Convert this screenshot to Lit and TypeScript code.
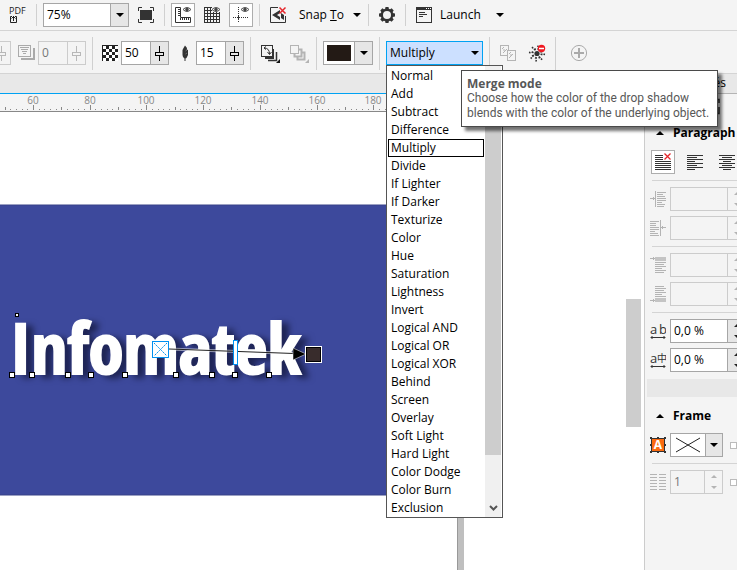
import { LitElement, html, svg, css } from "lit";
import { customElement, state } from "lit/decorators.js";
import { classMap } from "lit/directives/class-map.js";

const MODES = [
  "Normal", "Add", "Subtract", "Difference", "Multiply", "Divide", "If Lighter", "If Darker",
  "Texturize", "Color", "Hue", "Saturation", "Lightness", "Invert", "Logical AND", "Logical OR",
  "Logical XOR", "Behind", "Screen", "Overlay", "Soft Light", "Hard Light", "Color Dodge",
  "Color Burn", "Exclusion",
];

const icon = (body: unknown, w = 24, h = 24) =>
  html`<svg class="icon" width=${w} height=${h} viewBox="0 0 ${w} ${h}" aria-hidden="true">${body}</svg>`;

const eye = svg`<path d="M12 6.5Q16 2.5 20 6.5Q16 10.500 12 6.500Z" fill="#f4f4f4" stroke="#555"/><circle cx="16" cy="6.500" r="1.700" fill="#444"/>`;

/* Horizontal bars given as [x, y, width] */
const bars = (rows: number[][], color: string, thick = 1) =>
  rows.map(([x, y, w]) => svg`<rect x=${x} y=${y} width=${w} height=${thick} fill=${color}/>`);

const checker = () => {
  const cells = [];
  for (let r = 0; r < 5; r++)
    for (let c = 0; c < 5; c++)
      if ((r + c) % 2 === 0) cells.push(svg`<rect x=${1 + c * 3} y=${1 + r * 3} width="3" height="3" fill="#fff"/>`);
  return cells;
};

const icons = {
  pdf: icon(svg`<text x="3" y="11" font-size="9" fill="#222">PDF</text>
    <path d="M6 13.500H4.500V19.500H10.500V13.500H9M7.500 18V13M5.500 15.500L7.500 13.500L9.500 15.500" fill="none" stroke="#222"/>`),
  full: icon(svg`<rect x="6" y="7" width="12" height="10" fill="#333"/>
    <path d="M8 4.500H4.500V8M16 4.500H19.500V8M4.500 16V19.500H8M19.500 16V19.500H16" fill="none" stroke="#333"/>`),
  rulers: icon(svg`<path d="M4.500 4.500H9.500V14.500H19.500V19.500H4.500Z" fill="#fff" stroke="#333"/>
    <path d="M7 6.500H9M7 8.500H9M7 10.500H9M7 12.500H9M9.500 15V17M11.500 15V17M13.500 15V17M15.500 15V17M17.500 15V17" stroke="#333"/>${eye}`),
  grid: icon(svg`<path d="M4.500 4V20M7.500 4V20M10.500 4V20M13.500 9V20M16.500 9V20M19.500 9V20M4 4.500H12M4 7.500H12M4 10.500H20M4 13.500H20M4 16.500H20M4 19.500H20" stroke="#333" fill="none"/>${eye}`),
  guides: icon(svg`<path d="M4 14.500H20" stroke="#333" stroke-dasharray="1 1"/><path d="M9.500 4V20" stroke="#333" stroke-dasharray="1 1"/><path d="M8 14.500H11M9.500 13V16" stroke="#333"/>${eye}`),
  snap: icon(svg`<path d="M12 4.500H4.500V19.500H19.500V13" fill="none" stroke="#333"/>
    <path d="M14 7L6 12L14 17V14L11 12L14 10Z" fill="#333"/><path d="M15 10L18 12V17L15 15Z" fill="#333"/>
    <path d="M13.500 4.500L19.500 10.500M19.500 4.500L13.500 10.500" stroke="#e5262b" stroke-width="1.500"/>`),
  gear: icon(svg`<circle cx="12" cy="12" r="5.200" fill="none" stroke="#333" stroke-width="2.400"/>
    ${[0, 45, 90, 135, 180, 225, 270, 315].map((a) => svg`<path d="M10 6.500L10.500 4H13.500L14 6.500Z" fill="#333" transform="rotate(${a} 12 12)"/>`)}`),
  launch: icon(svg`<rect x="4.500" y="4.500" width="15" height="15" fill="none" stroke="#333"/><rect x="4" y="4" width="16" height="3" fill="#333"/>
    <path d="M14 5.500H15M16 5.500H17M18 5.500H19" stroke="#fff"/>${bars([[7, 9, 6], [7, 11, 8], [7, 13, 4]], "#333")}`),
  fade: icon(svg`<path d="M5 18H18V7" fill="none" stroke="#aaa" stroke-width="2"/><rect x="2.500" y="4.500" width="12" height="11" fill="#f4f4f4" stroke="#aaa"/>
    <path d="M4 6.500H13M5 8.500H12M6 10.500H11M7 12.500H10" stroke="#aaa"/>`, 22, 24),
  opacity: icon(svg`<g transform="translate(3 4)"><rect width="16" height="16" fill="#222"/>${checker()}</g>`, 22, 24),
  feather: icon(svg`<path d="M11 4.500L13 7L12.800 8.500L14 9V14L12.500 17L11.500 17.500V20H10.500V17.500L9 16L8.500 14V9L9.500 7Z" fill="#333"/><path d="M11.500 10L13 9M11.500 13L13 12" stroke="#999" stroke-width="0.600"/>`, 22, 24),
  direction: icon(svg`<path d="M8 17H16V8" fill="none" stroke="#333" stroke-width="2"/><path d="M11 19.500H19.500V11" fill="none" stroke="#333" stroke-width="1.500"/>
    <rect x="4.500" y="4.500" width="11" height="11" fill="#f4f4f4" stroke="#333"/><path d="M7 7Q12.500 7 12.500 13M10.500 11L12.500 13.500L14.500 11M9 5.500L7 7L9 8.500" fill="none" stroke="#333"/><path d="M23 18V22H19Z" fill="#111"/>`),
  attributes: icon(svg`<path d="M13 8.500H15.500V15.500H8.500V13M16 11.500H18.500V18.500H11.500V16" fill="none" stroke="#b4b4b4" stroke-width="2"/><rect x="4.500" y="4.500" width="8" height="8" fill="#f4f4f4" stroke="#b4b4b4"/><path d="M23 18V22H19Z" fill="#b4b4b4"/>`),
  copy: icon(svg`<rect x="4.500" y="4.500" width="8" height="10" fill="#f4f4f4" stroke="#b4b4b4"/><rect x="11.500" y="9.500" width="8" height="10" fill="#f4f4f4" stroke="#b4b4b4"/>
    <path d="M6 8L8 6M7 12L11 8M13 13L15 11M13 17L17 13M7 9H9M14 14H16" stroke="#b4b4b4"/>`),
  clear: icon(svg`<circle cx="12" cy="12.500" r="2.600" fill="#333"/><circle cx="12" cy="12.500" r="4.600" fill="none" stroke="#333" stroke-width="2" stroke-dasharray="1.800 1.811"/>
    <circle cx="12" cy="12.500" r="7.300" fill="none" stroke="#333" stroke-width="1.600" stroke-dasharray="1.600 4.133"/>
    <circle cx="16.500" cy="7.500" r="3.700" fill="#f01820"/><path d="M14 7.500H19" stroke="#fff" stroke-width="1.500"/>`),
  plus: icon(svg`<circle cx="12" cy="12" r="7.600" fill="none" stroke="#aaa"/><path d="M12 7V17M7 12H17" stroke="#aaa" stroke-width="2"/>`),
  alignNone: icon(svg`${bars([[4, 5, 8], [4, 7, 8], [4, 9, 8], [4, 11, 16], [4, 13, 16], [4, 15, 16], [4, 17, 16], [4, 19, 16]], "#333")}
    <path d="M13.500 3.500L19.500 9.500M19.500 3.500L13.500 9.500" stroke="#e5262b" stroke-width="1.300"/>`),
  alignLeft: icon(bars([[4, 5, 16], [4, 7, 10], [4, 9, 16], [4, 11, 8], [4, 13, 16], [4, 15, 10], [4, 17, 16], [4, 19, 8]], "#333")),
  alignCenter: icon(bars([[4, 5, 16], [7, 7, 10], [4, 9, 16], [8, 11, 8], [4, 13, 16], [7, 15, 10], [4, 17, 16], [8, 19, 8]], "#333")),
  indentLeft: icon(svg`<path d="M5.500 4V20M0 11.500H5M3.500 10V13" stroke="#b4b4b4"/>${bars([[7, 5, 9], [7, 7, 6], [7, 9, 8], [7, 11, 9], [7, 13, 9], [7, 15, 5], [7, 17, 8], [7, 19, 7]], "#b4b4b4")}`, 16, 24),
  indentRight: icon(svg`<path d="M10.500 4V20M11 11.500H16M12.500 10V13" stroke="#b4b4b4"/>${bars([[0, 5, 9], [0, 7, 6], [0, 9, 6], [0, 11, 9], [0, 13, 9], [0, 15, 5], [0, 17, 8], [0, 19, 9]], "#b4b4b4")}`, 16, 24),
  before: icon(svg`<rect x="5" y="4" width="11" height="4" fill="#c4c4c4"/><path d="M0 5.500H5M3.500 4V7" stroke="#b4b4b4"/>${bars([[5, 9, 11], [5, 11, 9], [5, 13, 11], [5, 15, 7], [5, 17, 11], [5, 19, 9]], "#b4b4b4")}`, 16, 24),
  after: icon(svg`<rect x="5" y="16" width="11" height="4" fill="#c4c4c4"/><path d="M0 18.500H5M3.500 17V20" stroke="#b4b4b4"/>${bars([[5, 4, 9], [5, 6, 11], [5, 8, 9], [5, 10, 11], [5, 12, 7], [5, 14, 11]], "#b4b4b4")}`, 16, 24),
  charSpace: icon(svg`<text x="0" y="15" font-size="13" fill="#333">a</text><text x="9" y="15" font-size="13" fill="#333">b</text><path d="M1 18.500H15M2.500 17L1 18.500L2.500 20M13.500 17L15 18.500L13.500 20" fill="none" stroke="#333"/>`, 16, 24),
  langSpace: icon(svg`<text x="0" y="15" font-size="13" fill="#333">a</text><text x="7" y="14" font-size="10" fill="#333">中</text><path d="M1 18.500H15M2.500 17L1 18.500L2.500 20M13.500 17L15 18.500L13.500 20" fill="none" stroke="#333"/>`, 16, 24),
  frame: icon(svg`<rect x="1.500" y="5.500" width="13" height="13" fill="#fb6a10" stroke="#333"/><text x="8" y="16" font-size="12" font-weight="700" fill="#fff" text-anchor="middle">A</text>
    ${[[0, 4], [7, 4], [14, 4], [0, 11], [14, 11], [0, 18], [7, 18], [14, 18]].map(([x, y]) => svg`<rect x=${x} y=${y} width="2" height="2" fill="#333"/>`)}`, 16, 24),
  columns: icon(bars([4, 7, 10, 13, 16, 19].flatMap((y) => [[0, y, 7], [9, y, 7]]), "#b4b4b4"), 16, 24),
  slider: icon(svg`<path d="M8.500 4V19" stroke="currentColor"/><rect x="4.500" y="10.500" width="8" height="3" fill="var(--face)" stroke="currentColor"/>`, 17, 22),
  noFill: icon(svg`<path d="M5 4L29 18M29 4L5 18" stroke="#222"/>`, 34, 22),
};

const NODES = [12, 32, 68, 91, 125, 176, 212, 235, 269];

@customElement("app-root")
export class AppRoot extends LitElement {
  @state() mode = "Multiply";

  static styles = css`
    :host {
      display: flex;
      flex-direction: column;
      min-height: 100vh;
      overflow: hidden;
      background: #f4f4f4;
      color: #000;
      font: 12px/18px "Open Sans", "Noto Sans CJK SC", sans-serif;
    }
    * { box-sizing: border-box; }
    .icon { display: block; flex: none; }
    button, input, select { font: inherit; color: inherit; margin: 0; padding: 0; border: 0; background: none; border-radius: 0; }
    .bar { display: flex; align-items: center; gap: 5px; padding: 0 6px; border-bottom: 1px solid #d4d4d4; white-space: nowrap; }
    .bar > * { flex: none; }
    .standard { height: 31px; }
    .property { height: 43px; padding: 2px 0 0; position: relative; z-index: 2; }
    .sep { width: 1px; height: 22px; margin: 0 1px; background: #d0d0d0; }
    .property .sep { height: 33px; }
    .tool { display: flex; align-items: center; justify-content: center; min-width: 24px; height: 24px; }
    .tool.on { background: #fff; border: 1px solid #adadad; }
    .tool.on .icon { margin: -1px; }
    .tool.wide { width: 34px; }
    .menu { width: 96px; justify-content: flex-start; gap: 9px; }
    .menu.tight { gap: 4px; }
    .menu .name { flex: 1; text-align: left; }
    .menu .caret { margin-right: 4px; }
    .caret { width: 0; border: 4px solid transparent; border-top-color: #000; border-bottom: 0; }
    .field { display: flex; height: 24px; border: 1px solid #a6a6a6; background: #fff; --face: #e6e6e6; }
    .field input { flex: 1; width: 0; min-width: 0; padding-left: 3px; }
    .field.off { border-color: #ccc; color: #777; background: #f4f4f4; --face: #f4f4f4; }
    .drop { display: flex; align-items: center; justify-content: center; width: 18px; background: #e6e6e6; border-left: 1px solid #a6a6a6; }
    .zoom { width: 86px; }
    .amount { display: flex; }
    .amount .field { width: 48px; }
    .knob { width: 18px; border-left: 1px solid #a6a6a6; background: var(--face); }
    .off .knob { border-color: #ccc; color: #b8b8b8; }
    .stub { width: 11px; border-left: 0; justify-content: flex-end; overflow: hidden; }
    .colour { width: 50px; }
    .swatch { flex: 1; border: 3px solid #fff; background: #231a15; }
    .merge { position: relative; width: 97px; height: 24px; }
    .merge select { appearance: none; width: 100%; height: 24px; padding-left: 3px; border: 1px solid #00a2f3; background: #cce0ff; }
    .merge > .caret { position: absolute; right: 4px; top: 10px; pointer-events: none; }
    .popup { position: absolute; top: 24px; left: 0; display: flex; width: 117px; border: 1px solid #555; background: #fff; z-index: 1; }
    .options { flex: 1; margin: 0; padding: 1px 1px 0; list-style: none; }
    .options li { height: 18px; padding-left: 2px; border: 1px solid transparent; line-height: 16px; }
    .options li.current { border-color: #000; }
    .track { display: flex; flex-direction: column; width: 17px; background: #f0f0f0; border-right: 1px solid #fff; }
    .arrow { height: 18px; display: flex; justify-content: center; align-items: center; }
    .thumb { flex: 1; background: #cdcdcd; }
    .rest { height: 44px; }
    .tip { position: absolute; top: 29px; left: 75px; width: 257px; padding: 5px 0 5px 5px; border: 1px solid #4a4a4a; background: #fff; color: #575757; line-height: 15px; box-shadow: 4px 4px 3px #0000008c; z-index: 2; }
    .tip strong, .tip span { display: block; }
    .tip span { font-family: "Open Sans SemiCondensed", "Roboto", sans-serif; }
    .work { flex: 1; display: grid; grid-template-columns: minmax(0, 1fr) 93px; }
    .doc { display: flex; flex-direction: column; }
    .tabs { height: 20px; background: #e8e8e8; border-bottom: 1px solid #00a2f3; }
    .ruler { display: block; width: 100%; height: 18px; background: #f4f4f4; border-bottom: 1px solid #888; }
    .ruler text { font-size: 10px; fill: #888; text-anchor: middle; }
    .stage { position: relative; flex: 1; background: #fff; min-height: 458px; }
    .art { position: absolute; inset: 0; width: 100%; height: 100%; }
    .wordmark { font: 800 71px "Open Sans Condensed", "Roboto", sans-serif; filter: drop-shadow(7px 3px 3px #1d2352); }
    .scroller { position: absolute; right: 3px; top: 187px; width: 15px; height: 128px; background: #cdcdcd; }
    .docker { border-left: 1px solid #ccc; overflow: hidden; display: flex; }
    .inner { flex: 1; min-width: 0; margin-left: 2px; background: #f4f4f4; }
    .docker-tab { height: 20px; padding-right: 11px; text-align: right; background: #e8e8e8; border-bottom: 1px solid #b4b4b4; }
    .kinds { height: 27px; padding: 4px 17px 0 0; display: flex; justify-content: flex-end; }
    .section { display: flex; flex-direction: column; gap: 5px; padding: 0 0 7px 3px; }
    .section h2 { display: flex; align-items: center; gap: 9px; height: 24px; margin: 0; padding-left: 6px; font-size: 12px; font-weight: 700; }
    .up { width: 0; border: 4px solid transparent; border-bottom-color: #000; border-top: 0; }
    .rule { height: 1px; margin: 1px 0 1px 2px; background: #d4d4d4; }
    .aligns { display: flex; gap: 8px; padding-left: 1px; }
    .row { display: flex; align-items: center; gap: 4px; width: max-content; }
    .long { width: 76px; }
    .short { width: 53px; }
    .spin { display: flex; flex-direction: column; justify-content: space-around; align-items: center; width: 18px; background: var(--face); border-left: 1px solid #a6a6a6; }
    .off .spin { border-color: #ccc; }
    .spin i { width: 0; border: 3px solid transparent; }
    .spin .inc { border-bottom-color: #222; border-top: 0; }
    .spin .dec { border-top-color: #222; border-bottom: 0; }
    .off .spin .inc { border-bottom-color: #b4b4b4; }
    .off .spin .dec { border-top-color: #b4b4b4; }
    .band { height: 18px; margin-bottom: 7px; background: #e8e8e8; }
    .box { width: 7px; height: 7px; margin-left: 3px; border: 1px solid #bbb; background: #fff; }
  `;

  tool(label: string, glyph: unknown, kind = "") {
    return html`<button class="tool ${kind}" title=${label} aria-label=${label}>${glyph}</button>`;
  }

  amount(label: string, glyph: unknown, value: string, off = false) {
    return html`<label class="amount">${glyph}
      <span class=${classMap({ field: true, off })}><input aria-label=${label} .value=${value} ?disabled=${off} />
        <button class="knob" aria-label="${label} slider" ?disabled=${off}>${icons.slider}</button></span></label>`;
  }

  spinner(label: string, glyph: unknown, value: string, off: boolean, size = "long", extra: unknown = "") {
    return html`<label class="row">${glyph}
      <span class="field ${size} ${off ? "off" : ""}"><input aria-label=${label} .value=${value} ?disabled=${off} />
        <span class="spin"><i class="inc"></i><i class="dec"></i></span></span>${extra}</label>`;
  }

  ruler() {
    const step = 5.67;
    const ticks = [];
    for (let i = -5; i < 110; i++) {
      const x = Math.round(33 + i * step);
      const len = i % 10 === 0 ? 5 : i % 5 === 0 ? 3 : 1;
      ticks.push(svg`<rect x=${x} y=${16 - len} width="1" height=${len} fill="#888"/>`);
      if (i % 10 === 0 && x < 400) ticks.push(svg`<text x=${x} y="10">${60 + i * 2}</text>`);
    }
    return html`<svg class="ruler" aria-label="Horizontal ruler">${ticks}</svg>`;
  }

  artwork() {
    return html`<svg class="art" role="img" aria-label="Infomatek drawing">
      <rect x="457" y="0" width="7" height="100%" fill="#bfbfbf"/><rect x="457" y="0" width="1" height="100%" fill="#999"/>
      <rect x="-1" y="93" width="458" height="290" fill="#3d499c" stroke="#384287"/>
      <text class="wordmark" x="10" y="262" fill="#fff" stroke="#fff" stroke-width="2">Infomatek</text>
      <rect x="15.500" y="201.500" width="3" height="3" fill="#fff" stroke="#000"/>
      ${NODES.map((x) => svg`<rect x=${x - 2.5} y="260.500" width="5" height="5" fill="#fff" stroke="#000"/>`)}
      <path d="M169 237L294 241.500" stroke="#fff" stroke-width="3" stroke-opacity="0.500"/>
      <path d="M169 237L294 241.500" stroke="#222"/>
      <path d="M293 236L306 242L293 248Z" fill="#000" stroke="#fff" stroke-width="0.500"/>
      <rect x="152.500" y="229.500" width="16" height="16" fill="#fff" stroke="#0090f0"/>
      <path d="M154 231L167 244M167 231L154 244" stroke="#0090f0" stroke-dasharray="2 1"/>
      <rect x="233.500" y="228.500" width="4" height="24" fill="#fff" stroke="#0090f0"/>
      <rect x="305.500" y="234.500" width="16" height="16" fill="#382c2c" stroke="#fff"/><rect x="306.500" y="235.500" width="14" height="14" fill="none" stroke="#000"/>
    </svg>`;
  }

  render() {
    const sep = html`<span class="sep"></span>`;
    return html`
      <header class="bar standard">
        ${this.tool("Publish to PDF", icons.pdf)}${sep}
        <span class="field zoom"><input aria-label="Zoom level" .value=${"75%"} /><button class="drop" aria-label="Zoom levels"><span class="caret"></span></button></span>
        ${this.tool("Full-screen preview", icons.full)}${sep}
        ${this.tool("Show rulers", icons.rulers, "on")}${this.tool("Show grid", icons.grid)}${this.tool("Show guidelines", icons.guides, "on")}${sep}
        <button class="tool menu">${icons.snap}<span class="name">Snap <u>T</u>o</span><span class="caret"></span></button>${sep}
        ${this.tool("Options", icons.gear)}${sep}
        <button class="tool menu tight">${icons.launch}<span class="name">Launch</span><span class="caret"></span></button>
      </header>
      <div class="bar property">
        <span class="field off stub"><button class="knob" aria-label="Stretch slider" disabled>${icons.slider}</button></span>
        ${this.amount("Fade", icons.fade, "0", true)}${sep}
        ${this.amount("Opacity", icons.opacity, "50")}${this.amount("Feathering", icons.feather, "15")}${sep}
        ${this.tool("Feathering direction", icons.direction)}${this.tool("Feathering edges", icons.attributes)}${sep}
        <span class="field colour"><span class="swatch"></span><button class="drop" aria-label="Shadow color"><span class="caret"></span></button></span>${sep}
        <div class="merge">
          <select aria-label="Merge mode" @change=${(e: Event) => (this.mode = (e.target as HTMLSelectElement).value)}>
            ${MODES.map((m) => html`<option ?selected=${m === this.mode}>${m}</option>`)}
          </select><span class="caret"></span>
          <div class="popup">
            <ul class="options" role="listbox" aria-label="Merge modes">
              ${MODES.map((m) => html`<li role="option" class=${classMap({ current: m === this.mode })} aria-selected=${m === this.mode} @click=${() => (this.mode = m)}>${m}</li>`)}
            </ul>
            <div class="track"><span class="arrow"></span><span class="thumb"></span><span class="rest"></span>
              <span class="arrow">${icon(svg`<path d="M1 1L4.500 4.500L8 1" fill="none" stroke="#555" stroke-width="2"/>`, 9, 7)}</span></div>
          </div>
          <div class="tip" role="tooltip"><strong>Merge mode</strong><span>Choose how the color of the drop shadow</span><span>blends with the color of the underlying object.</span></div>
        </div>${sep}
        ${this.tool("Copy shadow properties", icons.copy)}${this.tool("Clear shadow", icons.clear)}${sep}
        ${this.tool("Add", icons.plus, "wide")}
      </div>
      <main class="work">
        <section class="doc">
          <div class="tabs"></div>
          ${this.ruler()}
          <div class="stage">${this.artwork()}<div class="scroller"></div></div>
        </section>
        <aside class="docker"><div class="inner">
          <div class="docker-tab">és</div>
          <div class="kinds">${icon(svg`<path d="M0 1.500H3V5M3 9V15.500H0" fill="none" stroke="#333" stroke-width="1.500"/>`, 4, 17)}</div>
          <section class="section">
            <h2><span class="up"></span>Paragraph</h2>
            <div class="aligns">${this.tool("No alignment", icons.alignNone, "on")}${this.tool("Align left", icons.alignLeft)}${this.tool("Align center", icons.alignCenter)}</div>
            <div class="rule"></div>
            ${this.spinner("Left indent", icons.indentLeft, "", true)}${this.spinner("Right indent", icons.indentRight, "", true)}
            <div class="rule"></div>
            ${this.spinner("Space before", icons.before, "", true)}${this.spinner("Space after", icons.after, "", true)}
            <div class="rule"></div>
            ${this.spinner("Character spacing", icons.charSpace, "0,0 %", false)}${this.spinner("Language spacing", icons.langSpace, "0,0 %", false)}
          </section>
          <div class="band"></div>
          <section class="section">
            <h2><span class="up"></span>Frame</h2>
            <div class="row">${icons.frame}<span class="field short">${icons.noFill}<button class="drop" aria-label="Frame color"><span class="caret"></span></button></span><span class="box"></span></div>
            <div class="rule"></div>
            ${this.spinner("Columns", icons.columns, "1", true, "short", html`<span class="box"></span>`)}
          </section>
        </div></aside>
      </main>
    `;
  }
}
